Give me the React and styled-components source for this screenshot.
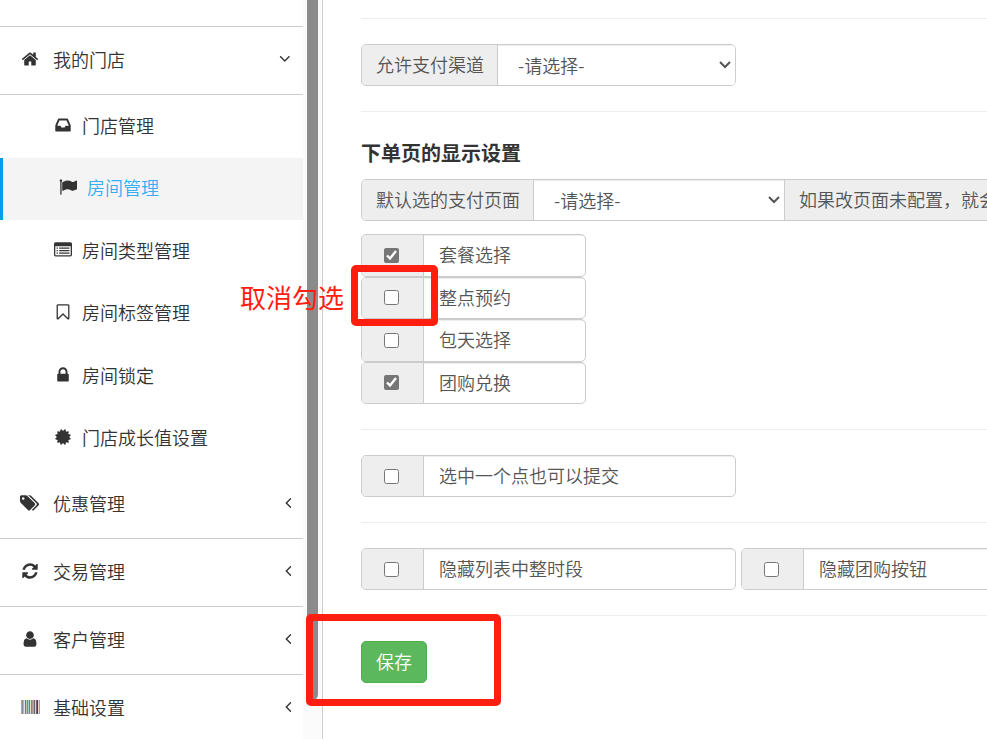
import styled, {createGlobalStyle, css} from "styled-components";

const GlobalStyle = createGlobalStyle`
    *, *::before, *::after {
        box-sizing: border-box;
    }
    body {
        margin: 0;
        background: #fff;
        color: #333;
        font-family: "Noto Sans CJK SC", "Liberation Sans", sans-serif;
        font-size: 18px;
        font-weight: 350;
        line-height: 26px;
    }
    input, select, button {
        font: inherit;
        margin: 0;
    }
`;

const Shell = styled.div`
    position: relative;
    display: flex;
    height: 100vh;
    overflow: hidden;
`;

const Sidebar = styled.nav`
    flex: 0 0 303px;
    overflow: hidden;
`;

const SidebarTop = styled.div`
    height: 27px;
    border-bottom: 1px solid #ccc;
`;

const MenuLink = styled.a`
    display: flex;
    align-items: center;
    height: 68px;
    padding: 0 12px 3px 20px;
    border-bottom: 1px solid #ccc;
    color: #333;
    text-decoration: none;
`;

const MenuText = styled.span`
    flex: 1;
    margin-left: 13px;
`;

const SubMenu = styled.ul`
    display: grid;
    grid-auto-rows: 1fr;
    height: 376px;
    margin: 0;
    padding: 0 0 1px;
    list-style: none;
`;

const SubLink = styled.a`
    display: flex;
    align-items: center;
    gap: 9px;
    height: 100%;
    padding: 0 0 3px 53px;
    color: #333;
    text-decoration: none;
    ${(props) => props.$active && css`
        padding-left: 55px;
        border-left: 3px solid #009fe8;
        background: #f4f4f4;
        color: #35adf3;
    `}
`;

const IconBox = styled.span`
    display: flex;
    justify-content: center;
    flex: 0 0 20px;
    color: #333;
`;

const Glyph = styled.svg`
    display: block;
    flex: none;
    height: 18px;
    fill: currentColor;
`;

const Gutter = styled.div`
    flex: 0 0 19px;
    padding: 0 4px 39px;
    background: #fbfbfb;
`;

const Thumb = styled.div`
    height: 100%;
    border-radius: 0 0 6px 6px;
    background: #8b8b8b;
`;

const Content = styled.main`
    flex: 1;
    min-width: 0;
    padding: 18px 0 0 38px;
    border-left: 1px solid #ccc;
    overflow: hidden;
`;

const Divider = styled.hr`
    margin: 0 0 25px;
    border: 0;
    border-top: 1px solid #eee;
    * + & {
        margin-top: 25px;
    }
`;

const Title = styled.h4`
    margin: 30px 0 15px;
    font-size: 20px;
    font-weight: 700;
    line-height: 22px;
`;

const Row = styled.div`
    display: flex;
    gap: 5px;
`;

const CheckList = styled.div`
    display: grid;
    grid-auto-rows: 1fr;
    width: 225px;
    height: 170px;
    margin-top: 13px;
`;

const Group = styled.div`
    display: flex;
    flex: none;
    width: ${(props) => props.$width || "auto"};
    min-height: 42px;
    border: 1px solid #ccc;
    border-radius: 5px;
    overflow: hidden;
    color: #555;
    white-space: nowrap;
`;

const Addon = styled.label`
    display: flex;
    flex: none;
    align-items: center;
    padding: 0 13px 2px 14px;
    background: #eee;
`;

const CheckAddon = styled.span`
    display: flex;
    flex: 0 0 61px;
    align-items: center;
    justify-content: center;
    padding-right: 2px;
    background: #eee;
`;

const Checkbox = styled.input`
    width: 15px;
    height: 15px;
    accent-color: #767676;
`;

const CheckLabel = styled.label`
    display: flex;
    flex: 1;
    align-items: center;
    padding: 0 0 2px 15px;
    border-left: 1px solid #ccc;
    box-shadow: inset 0 1px 1px rgba(0, 0, 0, 0.075);
`;

const Select = styled.select`
    flex: ${(props) => (props.$width ? `0 0 ${props.$width}` : "1")};
    min-width: 0;
    padding: 0 30px 0 20px;
    appearance: none;
    border: 0;
    border-left: 1px solid #ccc;
    border-radius: 0;
    border-right: ${(props) => (props.$width ? "1px solid #ccc" : "0")};
    color: #555;
    background: #fff url("data:image/svg+xml,%3Csvg xmlns='http://www.w3.org/2000/svg' width='12' height='8' fill='none' stroke='%23555' stroke-width='2'%3E%3Cpath d='M1 1l5 5 5-5'/%3E%3C/svg%3E") no-repeat right 4px center;
    box-shadow: inset 0 1px 1px rgba(0, 0, 0, 0.075);
`;

const SaveButton = styled.button`
    height: 42px;
    padding: 0 14px 2px;
    border: 1px solid #4cae4c;
    border-radius: 5px;
    background: #5cb85c;
    color: #fff;
    cursor: pointer;
`;

// red marks that lie over the page
const Mark = styled.div`
    position: absolute;
    left: ${(props) => props.$left}px;
    top: ${(props) => props.$top}px;
    width: ${(props) => props.$width}px;
    height: ${(props) => props.$height}px;
    border: 7px solid #ff1e10;
    border-radius: 5px;
    pointer-events: none;
`;

const MarkText = styled.span`
    position: absolute;
    left: 240px;
    top: 279px;
    color: #ff1e10;
    font-size: 26px;
    font-weight: 400;
    line-height: 36px;
    pointer-events: none;
`;

const icons = {
    home: "M1472 992v480q0 26-19 45t-45 19h-384v-384h-256v384h-384q-26 0-45-19t-19-45v-480q0-1 .5-3t.5-3l575-474 575 474q1 2 1 6zm223-69l-62 74q-8 9-21 11h-3q-13 0-21-7l-692-577-692 577q-12 8-24 7-13-2-21-11l-62-74q-8-10-7-23.5t11-21.5l719-599q32-26 76-26t76 26l244 204v-195q0-14 9-23t23-9h192q14 0 23 9t9 23v408l219 182q10 8 11 21.5t-7 23.5z",
    inbox: "M1151 960h316q-1-3-2.5-8t-2.5-8l-212-496h-708l-212 496q-1 2-2.5 8t-2.5 8h316l95 192h320zm513 30v482q0 26-19 45t-45 19h-1408q-26 0-45-19t-19-45v-482q0-62 25-123l238-552q10-25 36.5-42t52.5-17h832q26 0 52.5 17t36.5 42l238 552q25 61 25 123z",
    flag: "M320 256q0 72-64 110v1266q0 13-9.5 22.5t-22.5 9.5h-64q-13 0-22.5-9.5t-9.5-22.5v-1266q-64-38-64-110 0-53 37.5-90.5t90.5-37.5 90.5 37.5 37.5 90.5zm1472 64v763q0 25-12.5 38.5t-39.5 27.5q-215 116-369 116-61 0-123.5-22t-108.5-48-115.5-48-142.5-22q-192 0-464 146-17 9-33 9-26 0-45-19t-19-45v-742q0-32 31-55 21-14 79-43 236-120 421-120 107 0 200 29t219 88q38 19 88 19 54 0 117.5-21t110-47 88-47 54.5-21q26 0 45 19t19 45z",
    listAlt: "M256 1152h128v128h-128zM256 896h128v128h-128zM256 640h128v128h-128zM512 1152h1024v128h-1024zM512 896h1024v128h-1024zM512 640h1024v128h-1024zM1664 1376v-832q0-13-9.5-22.5t-22.5-9.5h-1472q-13 0-22.5 9.5t-9.5 22.5v832q0 13 9.5 22.5t22.5 9.5h1472q13 0 22.5-9.5t9.5-22.5zm128-1088v1088q0 66-47 113t-113 47h-1472q-66 0-113-47t-47-113v-1088q0-66 47-113t113-47h1472q66 0 113 47t47 113z",
    bookmark: "M1408 256h-1024v1242l423-406 89-85 89 85 423 406v-1242zm12-128q23 0 44 9 33 13 52.5 41t19.5 62v1289q0 34-19.5 62t-52.5 41q-19 8-44 8-48 0-83-32l-441-424-441 424q-36 33-83 33-23 0-44-9-33-13-52.5-41t-19.5-62v-1289q0-34 19.5-62t52.5-41q21-9 44-9h1048z",
    lock: "M640 768h512v-192q0-106-75-181t-181-75-181 75-75 181v192zm832 96v576q0 40-28 68t-68 28h-960q-40 0-68-28t-28-68v-576q0-40 28-68t68-28h32v-192q0-184 132-316t316-132 316 132 132 316v192h32q40 0 68 28t28 68z",
    certificate: "M1504 896l138 135q30 28 20 70-12 41-52 51l-188 48 53 186q12 41-19 70-29 31-70 19l-186-53-48 188q-10 40-51 52-12 2-19 2-31 0-51-22l-135-138-135 138q-28 30-70 20-41-11-51-52l-48-188-186 53q-41 12-70-19-31-29-19-70l53-186-188-48q-40-10-52-51-10-42 20-70l138-135-138-135q-30-28-20-70 12-41 52-51l188-48-53-186q-12-41 19-70 29-31 70-19l186 53 48-188q10-41 51-51 41-12 70 19l135 139 135-139q29-30 70-19 41 10 51 51l48 188 186-53q41-12 70 19 31 29 19 70l-53 186 188 48q40 10 52 51 10 42-20 70z",
    tags: "M448 448q0-53-37.5-90.5t-90.5-37.5-90.5 37.5-37.5 90.5 37.5 90.5 90.5 37.5 90.5-37.5 37.5-90.5zm1067 576q0 53-37 90l-491 492q-39 37-91 37-53 0-90-37l-715-716q-38-37-64.5-101t-26.5-117v-416q0-52 38-90t90-38h416q53 0 117 26.5t102 64.5l715 714q37 39 37 91zm384 0q0 53-37 90l-491 492q-39 37-91 37-36 0-59-14t-53-45l470-470q37-37 37-90 0-52-37-91l-715-714q-38-38-102-64.5t-117-26.5h224q53 0 117 26.5t102 64.5l715 714q37 39 37 91z",
    refresh: "M1639 1056q0 5-1 7-64 268-268 434.5t-478 166.5q-146 0-282.5-55t-243.5-157l-129 129q-19 19-45 19t-45-19-19-45v-448q0-26 19-45t45-19h448q26 0 45 19t19 45-19 45l-137 137q71 66 161 102t187 36q134 0 250-65t186-179q11-17 53-117 8-23 30-23h192q13 0 22.5 9.5t9.5 22.5zm25-800v448q0 26-19 45t-45 19h-448q-26 0-45-19t-19-45 19-45l138-138q-148-137-349-137-134 0-250 65t-186 179q-11 17-53 117-8 23-30 23h-199q-13 0-22.5-9.5t-9.5-22.5v-7q65-268 270-434.5t480-166.5q146 0 284 55.5t245 156.5l130-129q19-19 45-19t45 19 19 45z",
    user: "M1536 1399q0 109-62.5 187t-150.5 78h-854q-88 0-150.5-78t-62.5-187q0-85 8.5-160.5t31.5-152 58.5-131 94-89 134.5-34.5q131 128 313 128t313-128q76 0 134.5 34.5t94 89 58.5 131 31.5 152 8.5 160.5zm-256-887q0 159-112.5 271.5t-271.5 112.5-271.5-112.5-112.5-271.5 112.5-271.5 271.5-112.5 271.5 112.5 112.5 271.5z",
    left: "M1203 544q0 13-10 23l-393 393 393 393q10 10 10 23t-10 23l-50 50q-10 10-23 10t-23-10l-466-466q-10-10-10-23t10-23l466-466q10-10 23-10t23 10l50 50q10 10 10 23z",
    down: "M1395 736q0 13-10 23l-466 466q-10 10-23 10t-23-10l-466-466q-10-10-10-23t10-23l50-50q10-10 23-10t23 10l393 393 393-393q10-10 23-10t23 10l50 50q10 10 10 23z",
};

const boxes = {
    tags: "0 0 1920 1792",
    left: "571 64 640 1792",
    down: "320 64 1152 1792",
};

const bars = ["#d09a86", "#8a8f96", "#a9b8b0", "#e4e0ea", "#77708a", "#b9c9a8", "#8d7f9c", "#a8cfd0", "#8a6f80", "#d8e4c4", "#7d84a8", "#b59a90", "#8fb5a0", "#6d5f78", "#cfd8dc", "#77606a", "#4a3f4a", "#e8d8c8", "#86a6dc"];

const Icon = ({name}) => {
    if (name === "barcode") {
        return (
            <Glyph viewBox="0 0 19 18" width="19" shapeRendering="crispEdges" aria-hidden="true">
                {bars.map((color, i) => (
                    <rect key={i} x={i} y="2" width="1" height="14" fill={color} />
                ))}
            </Glyph>
        );
    }
    return (
        <Glyph viewBox={boxes[name] || "0 0 1792 1792"} aria-hidden="true">
            <path d={icons[name]} />
        </Glyph>
    );
};

const subMenu = [
    {icon: "inbox", text: "门店管理"},
    {icon: "flag", text: "房间管理", active: true},
    {icon: "listAlt", text: "房间类型管理"},
    {icon: "bookmark", text: "房间标签管理"},
    {icon: "lock", text: "房间锁定"},
    {icon: "certificate", text: "门店成长值设置"},
];

const menu = [
    {icon: "tags", text: "优惠管理"},
    {icon: "refresh", text: "交易管理"},
    {icon: "user", text: "客户管理"},
    {icon: "barcode", text: "基础设置"},
];

const options = [
    {id: "package", text: "套餐选择", checked: true},
    {id: "hour", text: "整点预约"},
    {id: "day", text: "包天选择"},
    {id: "coupon", text: "团购兑换", checked: true},
];

const MenuItem = ({icon, text, open}) => (
    <MenuLink href="#">
        <IconBox><Icon name={icon} /></IconBox>
        <MenuText>{text}</MenuText>
        <Icon name={open ? "down" : "left"} />
    </MenuLink>
);

const CheckGroup = ({id, text, checked, width}) => (
    <Group $width={width}>
        <CheckAddon>
            <Checkbox type="checkbox" id={id} defaultChecked={checked} />
        </CheckAddon>
        <CheckLabel htmlFor={id}>{text}</CheckLabel>
    </Group>
);

const App = () => {

    return (
        <Shell>
            <GlobalStyle />
            <Sidebar>
                <SidebarTop />
                <MenuItem icon="home" text="我的门店" open />
                <SubMenu>
                    {subMenu.map((item) => (
                        <li key={item.text}>
                            <SubLink href="#" $active={item.active}>
                                <IconBox><Icon name={item.icon} /></IconBox>
                                {item.text}
                            </SubLink>
                        </li>
                    ))}
                </SubMenu>
                {menu.map((item) => (
                    <MenuItem key={item.text} {...item} />
                ))}
            </Sidebar>
            <Gutter>
                <Thumb />
            </Gutter>
            <Content>
                <Divider />
                <Group $width="375px">
                    <Addon htmlFor="channel">允许支付渠道</Addon>
                    <Select id="channel">
                        <option>-请选择-</option>
                    </Select>
                </Group>
                <Divider />
                <Title>下单页的显示设置</Title>
                <Group $width="max-content">
                    <Addon htmlFor="page">默认选的支付页面</Addon>
                    <Select id="page" $width="252px">
                        <option>-请选择-</option>
                    </Select>
                    <Addon as="span">如果改页面未配置，就会</Addon>
                </Group>
                <CheckList>
                    {options.map((item) => (
                        <CheckGroup key={item.id} {...item} />
                    ))}
                </CheckList>
                <Divider />
                <CheckGroup id="single" text="选中一个点也可以提交" width="375px" />
                <Divider />
                <Row>
                    <CheckGroup id="hideHour" text="隐藏列表中整时段" width="375px" />
                    <CheckGroup id="hideCoupon" text="隐藏团购按钮" width="375px" />
                </Row>
                <Divider />
                <SaveButton type="button">保存</SaveButton>
            </Content>
            <MarkText>取消勾选</MarkText>
            <Mark $left={351} $top={265} $width={87} $height={61} />
            <Mark $left={306} $top={614} $width={195} $height={92} />
        </Shell>
    );

}


export default App;
